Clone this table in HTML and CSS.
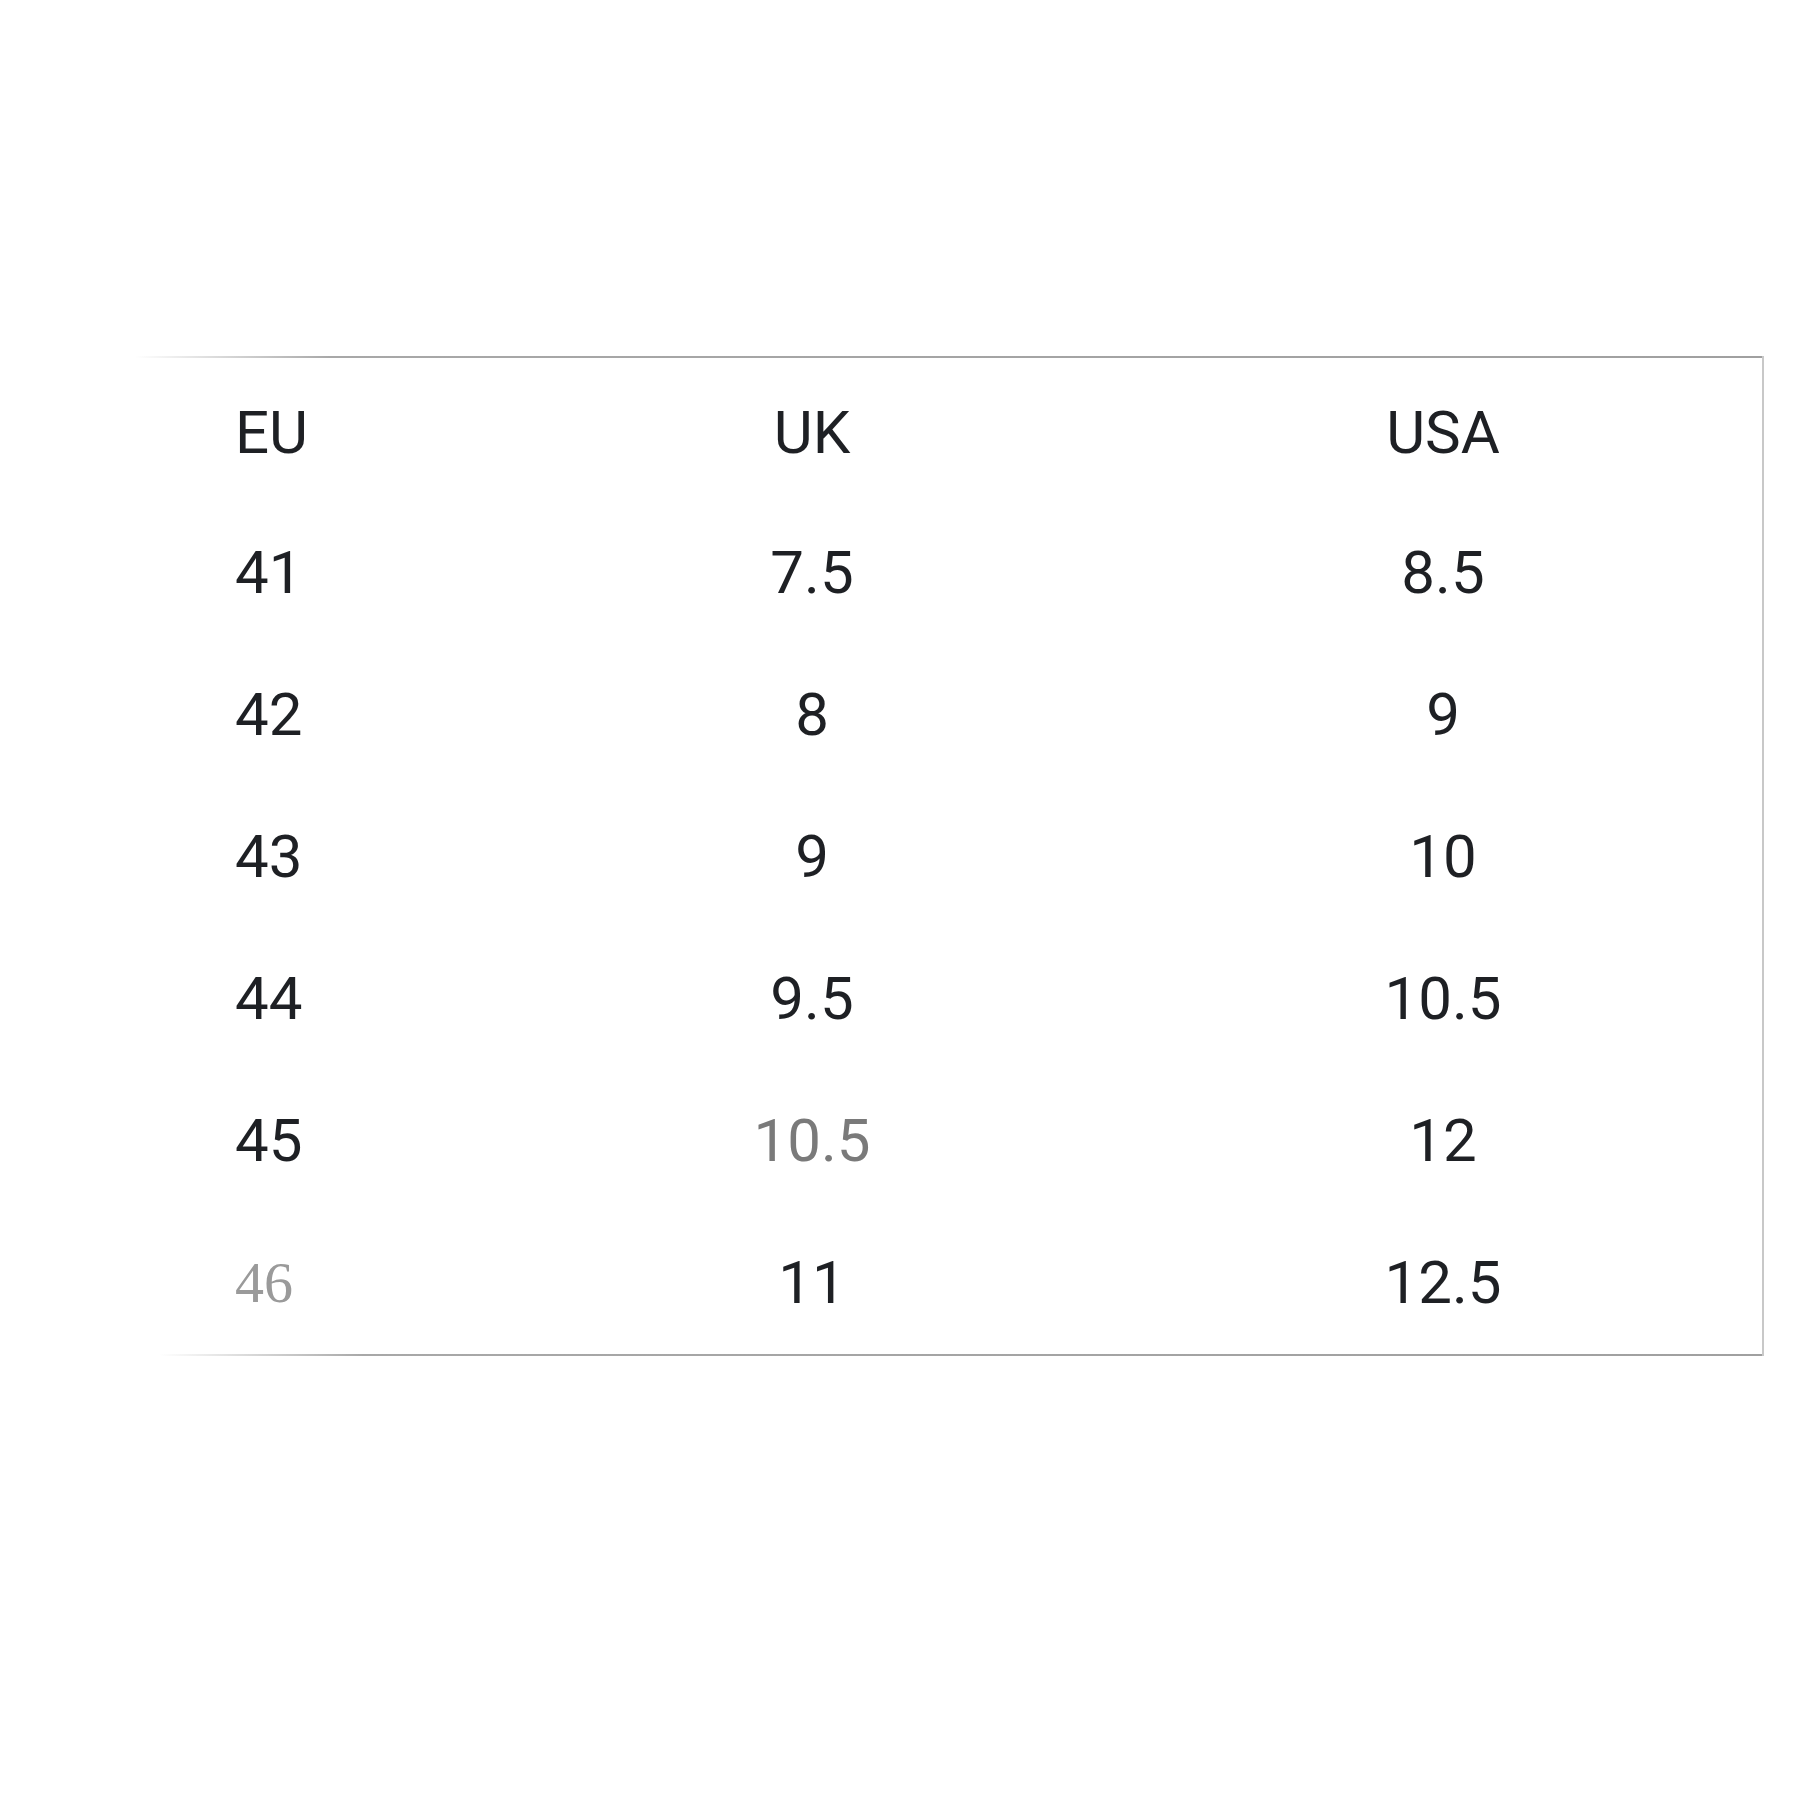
FILE: index.html
```html
<!DOCTYPE html>
<html>
<head>
<meta charset="utf-8">
<link rel="stylesheet" href="styles.css">
</head>
<body>
<div class="page">
  <div class="chart">
    <div class="cell c1">EU</div><div class="cell c2">UK</div><div class="cell c3">USA</div>
    <div class="cell c1">41</div><div class="cell c2">7.5</div><div class="cell c3">8.5</div>
    <div class="cell c1">42</div><div class="cell c2">8</div><div class="cell c3">9</div>
    <div class="cell c1">43</div><div class="cell c2">9</div><div class="cell c3">10</div>
    <div class="cell c1">44</div><div class="cell c2">9.5</div><div class="cell c3">10.5</div>
    <div class="cell c1">45</div><div class="cell c2 faded">10.5</div><div class="cell c3">12</div>
    <div class="cell c1 ghost">46</div><div class="cell c2">11</div><div class="cell c3">12.5</div>
  </div>
</div>
</body>
</html>
```

FILE: styles.css
```css
html, body {
  margin: 0;
  padding: 0;
  background: #ffffff;
}
.page {
  width: 1800px;
  height: 1800px;
  padding-top: 356px;
  padding-left: 135px;
  box-sizing: border-box;
}
.chart {
  width: 1629px;
  height: 1000px;
  box-sizing: border-box;
  padding: 8px 0 0 100px;
  border-right: 2px solid #c8c8c8;
  background:
    linear-gradient(to right, rgba(160,160,160,0) 0%, #a8a8a8 12%, #a0a0a0 100%) top left / 100% 2px no-repeat,
    linear-gradient(to right, rgba(160,160,160,0) 0%, rgba(160,160,160,0) 1.5%, #a8a8a8 14%, #a0a0a0 100%) bottom left / 100% 2px no-repeat;
  display: grid;
  grid-template-columns: 265px 624px 638px;
  grid-template-rows: 138px;
  grid-auto-rows: 142px;
  font-family: Roboto, "Liberation Sans", sans-serif;
  font-size: 60px;
  color: #1e2024;
}
.cell {
  display: flex;
  align-items: center;
  line-height: 1;
}
.c1 { justify-content: flex-start; }
.c2, .c3 { justify-content: center; }
.faded { color: #7a7a7a; }
.ghost {
  font-family: "Liberation Serif", serif;
  color: #9a9a9a;
  font-size: 58px;
}
```
